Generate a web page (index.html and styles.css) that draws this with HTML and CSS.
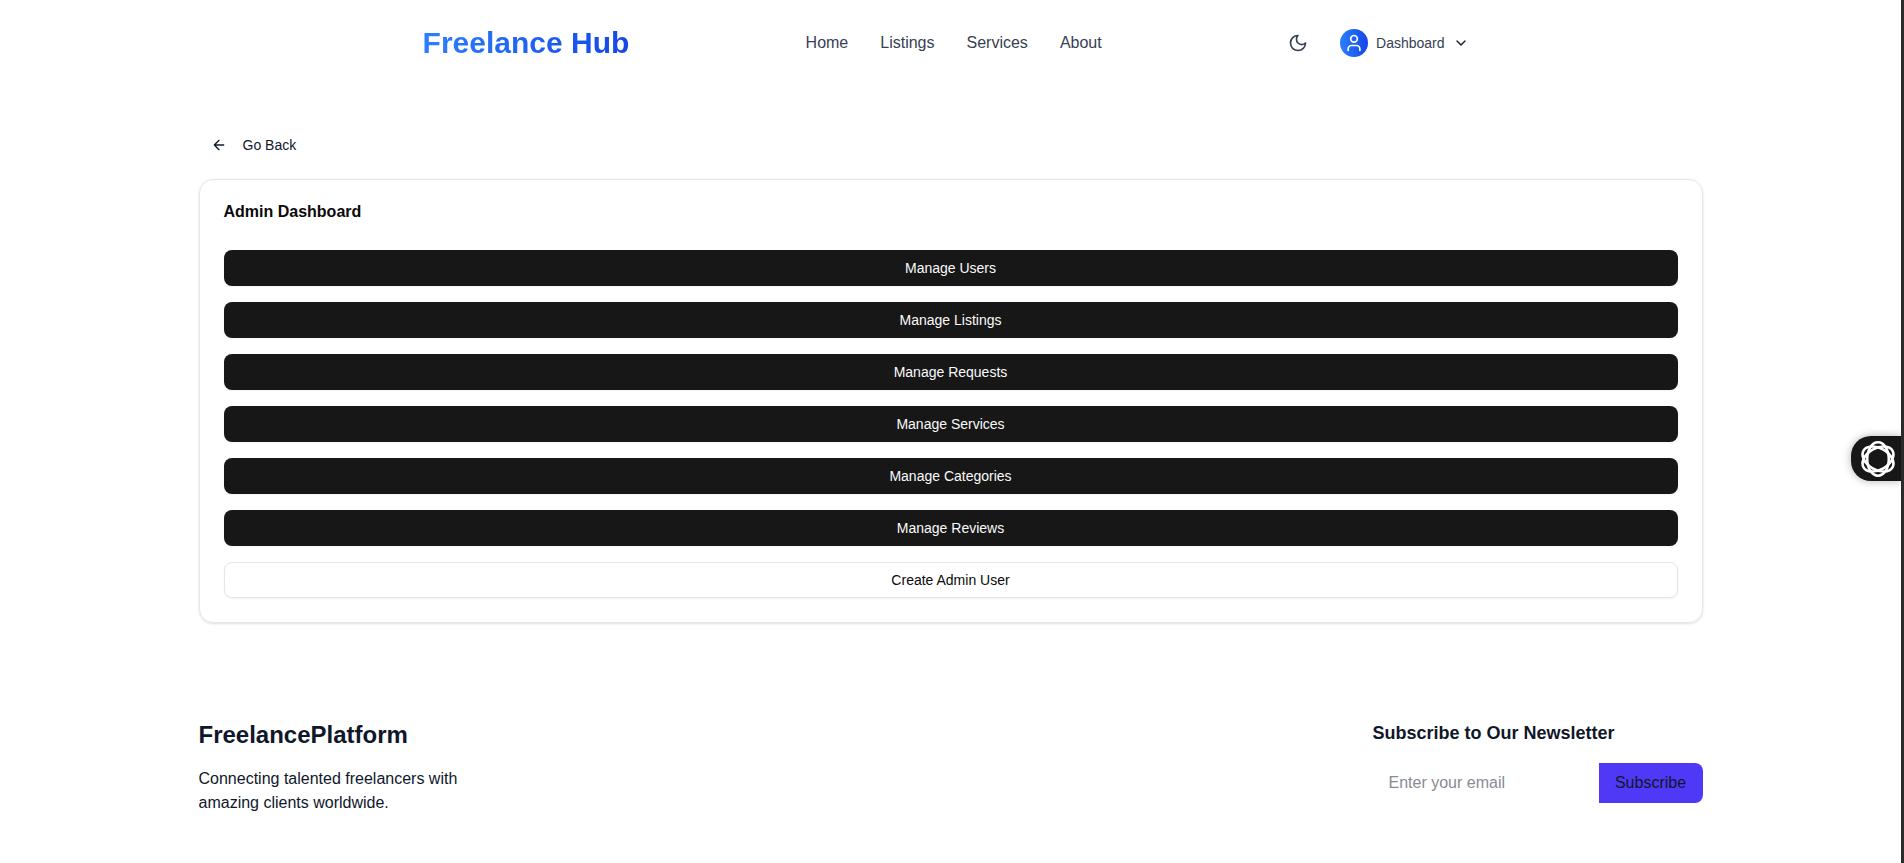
FILE: index.html
```html
<!DOCTYPE html>
<html lang="en">
<head>
<meta charset="utf-8">
<title>Freelance Hub</title>
<link rel="stylesheet" href="styles.css">
</head>
<body>
<header class="header">
  <a class="logo">Freelance Hub</a>
  <nav class="nav"><a>Home</a><a>Listings</a><a>Services</a><a>About</a></nav>
  <div class="actions">
    <svg class="moon icon" viewBox="0 0 24 24"><path d="M12 3a6 6 0 0 0 9 9 9 9 0 1 1-9-9Z"/></svg>
    <div class="account">
      <span class="avatar"><svg class="icon" viewBox="0 0 24 24"><circle cx="12" cy="7" r="4"/><path d="M19 21v-2a4 4 0 0 0-4-4H9a4 4 0 0 0-4 4v2"/></svg></span>
      <span>Dashboard</span>
      <svg class="chevron icon" viewBox="0 0 24 24"><path d="m6 9 6 6 6-6"/></svg>
    </div>
  </div>
</header>
<main class="container main">
  <a class="back"><svg class="icon" viewBox="0 0 24 24"><path d="m12 19-7-7 7-7M19 12H5"/></svg>Go Back</a>
  <section class="card">
    <h1 class="card-title">Admin Dashboard</h1>
    <div class="buttons">
      <button class="btn">Manage Users</button>
      <button class="btn">Manage Listings</button>
      <button class="btn">Manage Requests</button>
      <button class="btn">Manage Services</button>
      <button class="btn">Manage Categories</button>
      <button class="btn">Manage Reviews</button>
      <button class="btn btn-outline">Create Admin User</button>
    </div>
  </section>
</main>
<footer class="container footer">
  <div class="brand">
    <h2 class="brand-title">FreelancePlatform</h2>
    <p class="brand-text">Connecting talented freelancers with amazing clients worldwide.</p>
  </div>
  <div class="newsletter">
    <h3 class="newsletter-title">Subscribe to Our Newsletter</h3>
    <form class="form"><input class="email" type="email" placeholder="Enter your email"><button class="subscribe" type="button">Subscribe</button></form>
  </div>
</footer>
<div class="widget">
  <svg class="widget-icon" viewBox="-18 -18 36 36">
    <ellipse rx="10.8" ry="16.7"/>
    <ellipse rx="10.8" ry="16.7" transform="rotate(60)"/>
    <ellipse rx="10.8" ry="16.7" transform="rotate(120)"/>
  </svg>
</div>
<div class="edge"></div>
</body>
</html>
```
FILE: styles.css
```css
* { box-sizing: border-box; margin: 0; padding: 0; }
body {
  width: 1901px;
  height: 863px;
  overflow: hidden;
  background: #fff;
  color: #0f172a;
  font: 16px/24px "Liberation Sans", Arial, sans-serif;
}
button, input { font: inherit; border: 0; }
.icon { fill: none; stroke: currentColor; stroke-width: 2; stroke-linecap: round; stroke-linejoin: round; width: 16px; height: 16px; flex: none; }
.container { width: 1504px; margin-left: 198.5px; }

.header { height: 86px; padding-left: 422.6px; display: flex; align-items: center; color: #364153; }
.logo {
  width: 207.4px;
  font-size: 30px;
  line-height: 36px;
  font-weight: 700;
  white-space: nowrap;
  color: transparent;
  background: linear-gradient(90deg, #2b7fff, #1447e6);
  -webkit-background-clip: text;
  background-clip: text;
}
.nav { margin-left: 175.6px; display: flex; gap: 32px; }
.actions { margin-left: 186.4px; display: flex; align-items: center; }
.moon { width: 20px; height: 20px; }
.account { margin-left: 32px; display: flex; align-items: center; gap: 8px; font-size: 14px; line-height: 20px; }
.avatar { width: 28px; height: 28px; border-radius: 50%; display: grid; place-items: center; color: #fff; background: linear-gradient(90deg, #2b7fff, #1447e6); }
.avatar .icon { width: 20px; height: 20px; }
.chevron { color: #0f172a; }

.main { padding-top: 41px; }
.back { display: flex; align-items: center; gap: 16px; height: 36px; padding-left: 12px; font-size: 14px; line-height: 20px; }
.card { margin-top: 16px; height: 444px; padding: 24px; border: 1px solid #e5e5e5; border-radius: 14px; box-shadow: 0 1px 3px rgba(0,0,0,.1), 0 1px 2px -1px rgba(0,0,0,.1); color: #0a0a0a; }
.card-title { font-size: 16px; line-height: 16px; }
.buttons { margin-top: 30px; display: grid; gap: 16px; }
.btn { height: 36px; border-radius: 8px; background: #171717; color: #fafafa; font-size: 14px; line-height: 20px; box-shadow: 0 1px 2px rgba(0,0,0,.05); }
.btn-outline { background: #fff; color: #0a0a0a; border: 1px solid #e5e5e5; }

.footer { margin-top: 96px; display: flex; justify-content: space-between; }
.brand { width: 270px; }
.brand-title { font-size: 24px; line-height: 32px; }
.brand-text { margin-top: 16px; }
.newsletter-title { font-size: 18px; line-height: 28px; }
.form { margin-top: 16px; display: flex; }
.email { width: 226px; height: 40px; padding: 0 16px; background: transparent; outline: 0; }
.email::placeholder { color: #878b94; }
.subscribe { width: 104px; height: 40px; border-radius: 0 8px 8px 0; background: #4f39f6; color: #0f172a; }

.widget { position: fixed; right: 3px; top: 436px; width: 50px; height: 45px; padding: 5px 0 0 9px; border-radius: 20px 0 0 20px; background: #171717; box-shadow: 0 0 8px rgba(0,0,0,.3); }
.widget-icon { display: block; width: 36px; height: 36px; fill: none; stroke: #fff; stroke-width: 2.6; }
.edge { position: fixed; right: 0; top: 0; width: 3px; height: 100%; background: #2b2b2b; }
```
